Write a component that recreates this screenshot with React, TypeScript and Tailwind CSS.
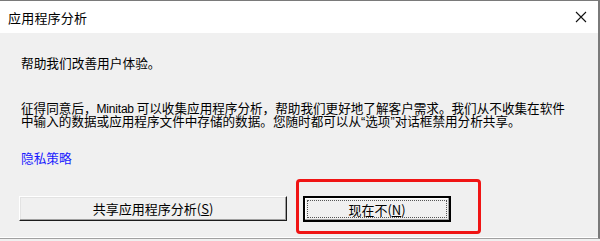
import React from 'react';

const font = { fontFamily: '"Noto Sans CJK SC", "Microsoft YaHei", sans-serif' };
const latin = { fontFamily: '"Liberation Sans", Arial, sans-serif' };

function CloseIcon() {
  return (
    <svg width="12" height="12" viewBox="0 0 12 12" className="block">
      <path d="M1 1 L11 11 M11 1 L1 11" stroke="#111" strokeWidth="1.1" fill="none" />
    </svg>
  );
}

export default function App() {
  return (
    <div
      className="relative w-[600px] h-[241px] overflow-hidden bg-[#f0f0f0] text-black"
      style={font}
    >
      <div className="flex h-[239px] flex-col border-t border-r-2 border-[#7a7a7a] border-b border-b-[#a0a0a0] shadow-[inset_0_-1px_0_#fff]">
        {/* title bar */}
        <div className="flex h-[32px] shrink-0 items-center justify-between bg-white pl-[8px] pr-[11px]">
          <span className="text-[13px] leading-none tracking-[0.2px]">应用程序分析</span>
          <CloseIcon />
        </div>

        {/* body */}
        <div className="flex flex-1 flex-col pl-[21px] pr-[10px] text-[12.7px]">
          <p className="mt-[22px] leading-[16px]">帮助我们改善用户体验。</p>
          <div className="mt-[30px] flex flex-col whitespace-nowrap text-[12.6px] leading-[13px]">
            <div className="h-[13px]">
              征得同意后，<span style={latin} className="inline-block text-[12px] leading-[13px] tracking-[-0.2px]">Minitab</span> 可以收集应用程序分析，帮助我们更好地了解客户需求。我们从不收集在软件
            </div>
            <div className="h-[13px]">
              中输入的数据或应用程序文件中存储的数据。您随时都可以从<span style={latin} className="inline-block leading-[13px]">“</span>选项<span style={latin} className="inline-block leading-[13px]">”</span>对话框禁用分析共享。
            </div>
          </div>
          <a className="mt-[23px] w-fit leading-[16px] text-[#1a1aff]">隐私策略</a>

          <div className="mt-[30px] -ml-[2px] flex gap-[16px]">
            <button className="flex h-[25px] w-[268px] items-center justify-center border border-t-white border-l-white border-r-[#1c1c1c] border-b-[#1c1c1c] bg-[#f0f0f0] text-[13px] leading-none shadow-[inset_-1px_-1px_0_#a0a0a0,inset_1px_1px_0_#e3e3e3]">
              共享应用程序分析(<span className="underline">S</span>)
            </button>
            <button className="flex h-[26px] w-[148px] items-center justify-center border-2 border-black bg-[#f0f0f0] p-[2px] text-[13px] leading-none shadow-[inset_-1px_-1px_0_#a0a0a0,inset_1px_1px_0_#fff]">
              <span className="flex h-full w-full items-center justify-center border border-dotted border-[#555]">
                现在不(<span className="underline">N</span>)
              </span>
            </button>
          </div>
        </div>
      </div>

      {/* red highlight annotation */}
      <div className="pointer-events-none absolute left-[296px] top-[179px] h-[55px] w-[185px] rounded-[4px] border-[3px] border-[#f01414]" />
    </div>
  );
}
